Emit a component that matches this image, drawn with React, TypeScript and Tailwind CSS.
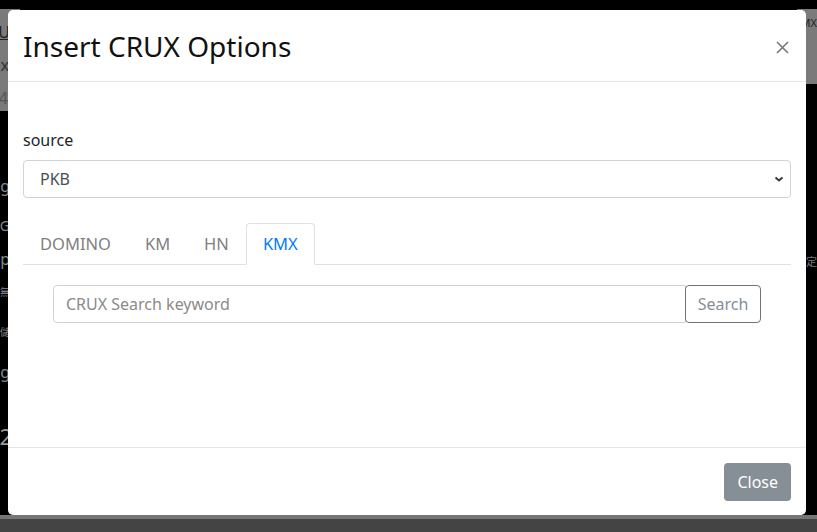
const font = { fontFamily: '"Noto Sans", "Open Sans", "Noto Sans CJK TC", sans-serif' };

function Backdrop() {
  return (
    <div className="absolute inset-0">
      {/* dimmed page behind the modal */}
      <div className="absolute left-0 top-[9px] w-[20px] h-[102px] bg-[#7a7a7a]" />
      <div className="absolute right-0 top-[9px] w-[20px] h-[75px] bg-[#7a7a7a]" />
      <div className="absolute left-0 bottom-0 w-full h-[17px] bg-[#444444] border-t-[4px] border-[#767676]" />
      <div className="absolute left-0 top-[14px] w-[8px] flex flex-col items-end text-[16px] leading-[36px]">
        <span className="text-[#222] underline -mr-[2px]">U</span>
        <span className="text-[#333] -mr-[1px] leading-[30px]">x</span>
        <span className="text-[#555] leading-[36px]">4</span>
      </div>
      <div className="absolute left-0 top-[166px] w-[10px] flex flex-col items-end text-[16px] text-[#888]">
        <span className="leading-[40px]">g</span>
        <span className="leading-[40px] text-[14px]">G</span>
        <span className="leading-[26px]">p</span>
        <span className="leading-[40px] text-[10px]">無</span>
        <span className="leading-[40px] text-[10px]">儲</span>
        <span className="leading-[40px]">g</span>
        <span className="leading-[60px] text-[22px] text-[#999] mt-[14px] -mr-[2px]">2</span>
      </div>
      <span className="absolute right-0 top-[15px] text-[11px] text-[#222]">MX</span>
      <span className="absolute right-0 top-[254px] text-[11px] text-[#777]">定</span>
    </div>
  );
}

export default function App() {
  const tabs = ['DOMINO', 'KM', 'HN', 'KMX'];
  const active = 'KMX';

  return (
    <div className="relative w-[817px] h-[532px] bg-black overflow-hidden" style={font}>
      <Backdrop />

      <div className="relative flex pl-[8px] pt-[10px]">
        {/* Modal */}
        <div className="w-[798px] h-[505px] bg-white rounded-[5px] flex flex-col text-[#212529]">
          {/* Header */}
          <div className="flex items-center justify-between h-[72px] px-[15px] border-b border-[#e5e5e5]">
            <h2 className="text-[28px] leading-none text-[#111] pt-[1px]">Insert CRUX Options</h2>
            <button className="mr-[2px] mt-[4px]">
              <svg width="13" height="13" viewBox="0 0 13 13">
                <path d="M1 1 L12 12 M12 1 L1 12" stroke="#777" strokeWidth="1.6" fill="none" />
              </svg>
            </button>
          </div>

          {/* Body */}
          <div className="flex-1 px-[15px] pt-[46px]">
            <label className="block text-[16px] leading-[24px] mb-[8px]">source</label>
            <div className="flex items-center justify-between h-[38px] border border-[#ced4da] rounded-[4px] pl-[16px] pr-[6px] text-[16px] text-[#495057]">
              <span>PKB</span>
              <svg width="10" height="8" viewBox="0 0 10 8">
                <path d="M1.5 2.5 L5 5.5 L8.5 2.5" fill="none" stroke="#343a40" strokeWidth="2" />
              </svg>
            </div>

            {/* Tabs */}
            <div className="flex mt-[25px] border-b border-[#dee2e6]">
              {tabs.map((t) => (
                <div
                  key={t}
                  className={
                    t === active
                      ? 'px-[16px] h-[42px] -mb-px flex items-center text-[16.5px] text-[#007bff] bg-white border border-[#dee2e6] border-b-white rounded-t-[4px]'
                      : 'px-[16px] h-[42px] -mb-px flex items-center text-[16.5px] text-[#808080] border border-transparent'
                  }
                >
                  {t}
                </div>
              ))}
            </div>

            {/* Search */}
            <div className="flex mx-[30px] mt-[20px] h-[38px]">
              <div className="flex-1 flex items-center border border-[#ced4da] rounded-l-[4px] px-[12px] text-[16px] text-[#8a8a8a]">
                CRUX Search keyword
              </div>
              <button className="w-[76px] border border-[#6c757d] rounded-[4px] -ml-px text-[16px] text-[#868e96]">
                Search
              </button>
            </div>
          </div>

          {/* Footer */}
          <div className="flex justify-end items-start h-[68px] pt-[15px] px-[15px] border-t border-[#e5e5e5]">
            <button className="h-[38px] px-[13px] rounded-[4px] bg-[#868e96] text-white text-[16px]">Close</button>
          </div>
        </div>
      </div>
    </div>
  );
}
